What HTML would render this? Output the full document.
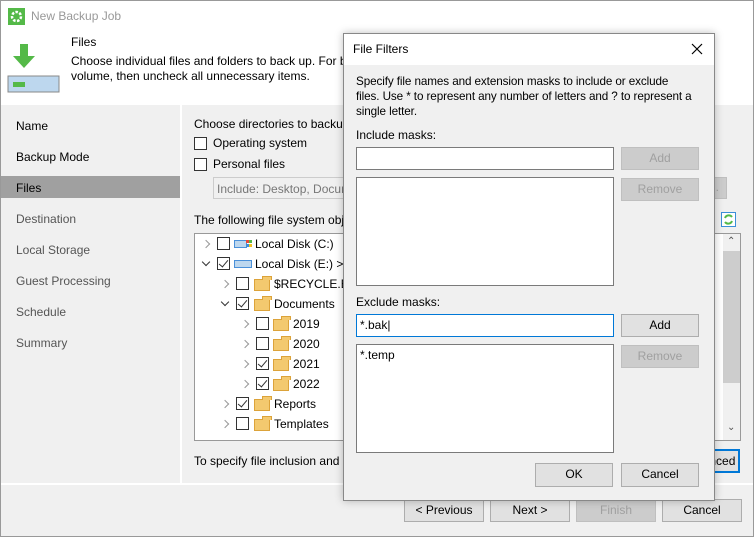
<!DOCTYPE html>
<html><head><style>
*{box-sizing:border-box;margin:0;padding:0}
body{width:754px;height:537px;overflow:hidden;background:#f0f0f0;font:12px "Liberation Sans",sans-serif;color:#000;position:relative}
.a{position:absolute}
.btn{position:absolute;background:#e1e1e1;border:1px solid #adadad;text-align:center;line-height:20px;font-size:12px}
.dis{background:#cccccc;border-color:#bfbfbf;color:#a0a0a0}
.cb{position:absolute;width:13px;height:13px;border:1px solid #333;background:#fff}
.cb.c::after{content:"";position:absolute;left:3px;top:0px;width:4px;height:8px;border:solid #333;border-width:0 1.5px 1.5px 0;transform:rotate(40deg)}
.fold{position:absolute;width:16px;height:12px;background:#f3c96f;border:1px solid #dca33a}
.fold::before{content:"";position:absolute;left:7px;top:-4px;width:8px;height:3px;background:#f3c96f;border:1px solid #dca33a;border-bottom:none}
.arr{position:absolute;width:6px;height:6px;border:solid #999;border-width:1.5px 1.5px 0 0;transform:rotate(45deg)}
.arr.o{border-color:#333;transform:rotate(135deg)}
.nav{position:absolute;left:16px;font-size:12px}
</style></head><body>
<div class="a" style="left:0;top:0;width:754px;height:537px;border:1px solid #999;background:#f0f0f0"></div>
<div class="a" style="left:1px;top:1px;width:752px;height:104px;background:#fff"></div>
<svg class="a" style="left:8px;top:8px" width="17" height="17"><rect width="17" height="17" fill="#54b948"/><circle cx="8.5" cy="8.5" r="4.5" fill="none" stroke="#fff" stroke-width="2.5" stroke-dasharray="2.5 1.5"/><circle cx="8.5" cy="8.5" r="2" fill="#54b948"/></svg>
<div class="a" style="left:31px;top:9px;color:#999;font-size:12px">New Backup Job</div>
<svg class="a" style="left:7px;top:42px" width="53" height="51"><path d="M13 2h8v12h7L17 26 6 14h7z" fill="#54b948"/><rect x="1" y="34" width="51" height="16" fill="#bdd7ee" stroke="#888"/><rect x="6" y="40" width="12" height="5" fill="#54b948"/></svg>
<div class="a" style="left:71px;top:35px">Files</div>
<div class="a" style="left:71px;top:54px;line-height:15px">Choose individual files and folders to back up. For b<br>volume, then uncheck all unnecessary items.</div>
<div class="a" style="left:1px;top:105px;width:179px;height:378px;background:#f0f0f0"></div>
<div class="a" style="left:180px;top:105px;width:2px;height:378px;background:#fff"></div>
<div class="a" style="left:1px;top:176px;width:179px;height:22px;background:#a0a0a0"></div>
<div class="nav" style="top:119px">Name</div>
<div class="nav" style="top:150px">Backup Mode</div>
<div class="nav" style="top:181px">Files</div>
<div class="nav" style="top:212px;color:#555">Destination</div>
<div class="nav" style="top:243px;color:#555">Local Storage</div>
<div class="nav" style="top:274px;color:#555">Guest Processing</div>
<div class="nav" style="top:305px;color:#555">Schedule</div>
<div class="nav" style="top:336px;color:#555">Summary</div>
<div class="a" style="left:1px;top:483px;width:752px;height:2px;background:#fff"></div>
<div class="a" style="left:194px;top:117px">Choose directories to backup</div>
<div class="cb" style="left:194px;top:137px"></div><div class="a" style="left:213px;top:136px">Operating system</div>
<div class="cb" style="left:194px;top:158px"></div><div class="a" style="left:213px;top:157px">Personal files</div>
<div class="a" style="left:213px;top:177px;width:500px;height:22px;border:1px solid #ccc;color:#777;padding:4px 3px">Include: Desktop, Docum</div>
<div class="btn dis" style="left:700px;top:177px;width:27px;height:22px;line-height:18px">…</div>
<div class="a" style="left:194px;top:213px">The following file system obj</div>
<svg class="a" style="left:721px;top:212px" width="15" height="15"><rect x=".5" y=".5" width="14" height="14" fill="#fff" stroke="#3c8fd8"/><path d="M4 6a4 4 0 0 1 7-1M11 9a4 4 0 0 1-7 1" stroke="#54b948" stroke-width="2" fill="none"/></svg>
<div class="a" style="left:194px;top:233px;width:547px;height:208px;background:#fff;border:1px solid #999"></div>
<div class="a" style="left:723px;top:234px;width:17px;height:206px;background:#f0f0f0"></div>
<div class="a" style="left:723px;top:251px;width:17px;height:132px;background:#cdcdcd"></div>
<div class="a" style="left:727px;top:236px;font-size:10px;color:#555">&#8963;</div>
<div class="a" style="left:727px;top:422px;font-size:10px;color:#555">&#8964;</div>
<div class="arr" style="left:203px;top:241px"></div><div class="cb" style="left:217px;top:237px"></div>
<svg class="a" style="left:234px;top:239px" width="18" height="10"><rect x=".5" y="1.5" width="12" height="7" fill="#bdd7ee" stroke="#4a90d9"/><rect x="12" y="1" width="3" height="3" fill="#e74c3c"/><rect x="15" y="1" width="3" height="3" fill="#54b948"/><rect x="12" y="5" width="3" height="3" fill="#3c8fd8"/><rect x="15" y="5" width="3" height="3" fill="#f3c020"/></svg>
<div class="a" style="left:255px;top:237px">Local Disk (C:)</div>
<div class="arr o" style="left:203px;top:259px"></div><div class="cb c" style="left:217px;top:257px"></div>
<svg class="a" style="left:234px;top:259px" width="18" height="10"><rect x=".5" y="1.5" width="17" height="7" fill="#bdd7ee" stroke="#4a90d9"/></svg>
<div class="a" style="left:255px;top:257px">Local Disk (E:) &gt;</div>
<div class="arr" style="left:222px;top:281px"></div><div class="cb" style="left:236px;top:277px"></div><div class="fold" style="left:254px;top:279px"></div><div class="a" style="left:274px;top:277px">$RECYCLE.BIN</div>
<div class="arr o" style="left:222px;top:299px"></div><div class="cb c" style="left:236px;top:297px"></div><div class="fold" style="left:254px;top:299px"></div><div class="a" style="left:274px;top:297px">Documents</div>
<div class="arr" style="left:242px;top:321px"></div><div class="cb" style="left:256px;top:317px"></div><div class="fold" style="left:273px;top:319px"></div><div class="a" style="left:293px;top:317px">2019</div>
<div class="arr" style="left:242px;top:341px"></div><div class="cb" style="left:256px;top:337px"></div><div class="fold" style="left:273px;top:339px"></div><div class="a" style="left:293px;top:337px">2020</div>
<div class="arr" style="left:242px;top:361px"></div><div class="cb c" style="left:256px;top:357px"></div><div class="fold" style="left:273px;top:359px"></div><div class="a" style="left:293px;top:357px">2021</div>
<div class="arr" style="left:242px;top:381px"></div><div class="cb c" style="left:256px;top:377px"></div><div class="fold" style="left:273px;top:379px"></div><div class="a" style="left:293px;top:377px">2022</div>
<div class="arr" style="left:222px;top:401px"></div><div class="cb c" style="left:236px;top:397px"></div><div class="fold" style="left:254px;top:399px"></div><div class="a" style="left:274px;top:397px">Reports</div>
<div class="arr" style="left:222px;top:421px"></div><div class="cb" style="left:236px;top:417px"></div><div class="fold" style="left:254px;top:419px"></div><div class="a" style="left:274px;top:417px">Templates</div>
<div class="a" style="left:194px;top:454px">To specify file inclusion and</div>
<div class="btn" style="left:680px;top:449px;width:60px;height:24px;border:2px solid #0078d7;text-align:right;padding-right:4px">Advanced</div>
<div class="btn" style="left:404px;top:499px;width:80px;height:23px">&lt; Previous</div>
<div class="btn" style="left:490px;top:499px;width:80px;height:23px">Next &gt;</div>
<div class="btn dis" style="left:576px;top:499px;width:80px;height:23px">Finish</div>
<div class="btn" style="left:662px;top:499px;width:80px;height:23px">Cancel</div>
<!-- dialog -->
<div class="a" style="left:343px;top:33px;width:372px;height:468px;background:#f0f0f0;border:1px solid #888;box-shadow:0 0 8px rgba(0,0,0,.25)"></div>
<div class="a" style="left:344px;top:34px;width:370px;height:31px;background:#fff"></div>
<div class="a" style="left:353px;top:42px">File Filters</div>
<svg class="a" style="left:691px;top:43px" width="12" height="12"><path d="M1 1l10 10M11 1L1 11" stroke="#000" stroke-width="1.2"/></svg>
<div class="a" style="left:356px;top:74px;line-height:15px;font-size:11.7px;letter-spacing:-0.1px">Specify file names and extension masks to include or exclude<br>files. Use * to represent any number of letters and ? to represent a<br>single letter.</div>
<div class="a" style="left:356px;top:128px">Include masks:</div>
<div class="a" style="left:356px;top:147px;width:258px;height:23px;background:#fff;border:1px solid #7a7a7a"></div>
<div class="btn dis" style="left:621px;top:147px;width:78px;height:23px">Add</div>
<div class="a" style="left:356px;top:177px;width:258px;height:109px;background:#fff;border:1px solid #7a7a7a"></div>
<div class="btn dis" style="left:621px;top:178px;width:78px;height:23px">Remove</div>
<div class="a" style="left:356px;top:295px">Exclude masks:</div>
<div class="a" style="left:356px;top:314px;width:258px;height:23px;background:#fff;border:1px solid #0078d7;padding:3px 3px">*.bak|</div>
<div class="btn" style="left:621px;top:314px;width:78px;height:23px">Add</div>
<div class="a" style="left:356px;top:344px;width:258px;height:109px;background:#fff;border:1px solid #7a7a7a;padding:3px 3px">*.temp</div>
<div class="btn dis" style="left:621px;top:345px;width:78px;height:23px">Remove</div>
<div class="btn" style="left:535px;top:463px;width:78px;height:24px">OK</div>
<div class="btn" style="left:621px;top:463px;width:78px;height:24px">Cancel</div>
</body></html>
